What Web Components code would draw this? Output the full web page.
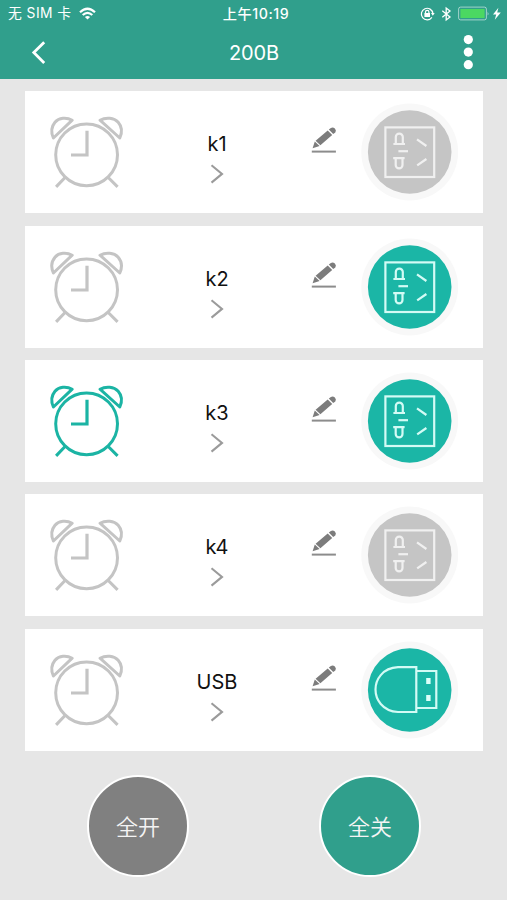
<!DOCTYPE html>
<html lang="zh-CN">
<head>
<meta charset="utf-8">
<meta name="viewport" content="width=device-width, initial-scale=1">
<title>200B</title>
<style>
  html, body {
    margin: 0;
    height: 100%;
    overflow: hidden;
    background: #e6e6e6;
    font-family: Inter, "Noto Sans CJK SC", sans-serif;
  }
</style>
</head>
<body>
<power-strip-page>
  <status-bar slot="header" carrier="无 SIM 卡" time="上午10:19"></status-bar>
  <nav-bar slot="header">200B</nav-bar>
  <outlet-card type="socket">k1</outlet-card>
  <outlet-card type="socket" on>k2</outlet-card>
  <outlet-card type="socket" on timer>k3</outlet-card>
  <outlet-card type="socket">k4</outlet-card>
  <outlet-card type="usb" on>USB</outlet-card>
  <round-button slot="footer">全开</round-button>
  <round-button slot="footer" primary>全关</round-button>
</power-strip-page>

<script>
class PowerStripPage extends HTMLElement {
    constructor() {
        super()
        this.attachShadow({ mode: 'open' })
    }

    connectedCallback() {
        this.shadowRoot.innerHTML = `
      <style>
        :host {
          display: flex;
          flex-direction: column;
          width: 507px;
          height: 900px;
        }
        header {
          height: 79px;
          background: #309f8c;
          color: #fff;
        }
        main {
          display: flex;
          flex-direction: column;
          gap: 12.33px;
          padding: 12.4px 24px 0 25px;
        }
        footer {
          display: grid;
          grid-template-columns: 232px 232px;
          justify-items: center;
          padding: 24.6px 0 0 22px;
        }
      </style>
      <header><slot name="header"></slot></header>
      <main><slot></slot></main>
      <footer><slot name="footer"></slot></footer>
    `
    }
}

class StatusBar extends HTMLElement {
    constructor() {
        super()
        this.attachShadow({ mode: 'open' })
    }

    connectedCallback() {
        this.shadowRoot.innerHTML = `
      <style>
        :host {
          display: grid;
          grid-template-columns: 1fr auto 1fr;
          align-items: center;
          height: 27px;
          padding: 0 5px 0 8px;
          font-size: 13.8px;
          line-height: 27px;
        }
        .left, .right {
          display: flex;
          align-items: center;
        }
        .left { gap: 7px; letter-spacing: 0.45px; }
        .right { justify-content: flex-end; }
        .time { font-size: 14.2px; font-weight: 500; letter-spacing: 0.6px; padding-left: 2px; }
        svg { display: block; }
      </style>
      <div class="left">
        <span>${this.getAttribute('carrier')}</span>
        <svg width="17" height="13" viewBox="0 0 17 13" fill="none" stroke="#fff" stroke-width="2.2">
          <path d="M1 5.2 Q8.5 -1.7 16 5.2"/>
          <path d="M3.7 8 Q8.5 3.6 13.3 8"/>
          <path d="M8.5 12.6 L5.9 10 Q8.5 7.9 11.1 10 Z" fill="#fff" stroke="none"/>
        </svg>
      </div>
      <span class="time">${this.getAttribute('time')}</span>
      <div class="right">
        <svg width="82" height="16" viewBox="0 0 82 16">
          <g fill="none" stroke="#fff" stroke-width="1.2">
            <path d="M11.9 11.4 A5.8 5.8 0 1 1 12.9 7.5"/>
            <path d="M5.5 7.3 V6 a1.7 1.7 0 0 1 3.4 0 V7.3"/>
          </g>
          <path d="M4.4 7 H10 V11 H4.4 Z M11 7 H14.7 L12.8 9.8 Z" fill="#fff"/>
          <path d="M22.3 4.8 L30 11 L26.2 14 V2 L30 5 L22.3 11.2" fill="none" stroke="#fff" stroke-width="1.3"/>
          <rect x="38.6" y="1.1" width="27.8" height="12.8" rx="2" fill="none" stroke="#fff" stroke-opacity=".55"/>
          <rect x="40.4" y="2.9" width="24.2" height="9.2" rx=".7" fill="#4bd862"/>
          <path d="M67.6 5.5 q1.7 2 0 4 Z" fill="#fff" fill-opacity=".6"/>
          <path d="M78.4 1.8 L73 8.6 H76.2 L74.8 13.8 L80.8 6.6 H77.2 Z" fill="#fff"/>
        </svg>
      </div>
    `
    }
}

class NavBar extends HTMLElement {
    constructor() {
        super()
        this.attachShadow({ mode: 'open' })
    }

    connectedCallback() {
        this.shadowRoot.innerHTML = `
      <style>
        :host {
          display: grid;
          grid-template-columns: 1fr auto 1fr;
          align-items: center;
          height: 51px;
          padding: 0 30px 0 31px;
          font-size: 20px;
          line-height: 49px;
        }
        svg { display: block; }
        .more { justify-self: end; }
        .title { letter-spacing: -0.15px; padding-top: 2px; }
      </style>
      <svg width="15" height="24" viewBox="0 0 15 24" fill="none" stroke="#fff" stroke-width="2.8">
        <path d="M13.2 1.2 L2.8 11.6 L13.2 22"/>
      </svg>
      <span class="title"><slot></slot></span>
      <svg class="more" width="18" height="36" viewBox="0 0 18 36" fill="#fff">
        <circle cx="9.3" cy="4.6" r="4.6"/>
        <circle cx="9.3" cy="17.1" r="4.6"/>
        <circle cx="9.3" cy="29.7" r="4.6"/>
      </svg>
    `
    }
}

class AlarmClock extends HTMLElement {
    constructor() {
        super()
        this.attachShadow({ mode: 'open' })
    }

    connectedCallback() {
        const color = this.hasAttribute('on') ? '#1bb4a4' : '#c4c4c4'
        this.shadowRoot.innerHTML = `
      <style>
        :host { display: block; }
        svg { display: block; }
      </style>
      <svg width="123" height="122" viewBox="0 0 123 122" fill="none"
           stroke="${color}" stroke-width="3" stroke-linejoin="round">
        <circle cx="61.6" cy="63.8" r="30.9"/>
        <path d="M62 39.8 V64 H46" stroke-width="3.2" stroke-linejoin="miter"/>
        <path d="M47.2 29.2 C41.5 25.9 33.8 26.6 30 31.2 C26.3 35.6 26 41.6 28.4 47 Z"/>
        <path d="M75 29.2 C81 25.9 89 26.6 93.2 31.2 C97 35.6 97.2 41.6 94.8 47 Z"/>
        <path d="M40.3 86.2 L31.1 95.9 M83 86.2 L92.6 95.9"/>
      </svg>
    `
    }
}

class OutletSwitch extends HTMLElement {
    constructor() {
        super()
        this.attachShadow({ mode: 'open' })
    }

    connectedCallback() {
        const on = this.hasAttribute('on')
        const icons = {
            socket: `
          <rect x="24.4" y="24.4" width="48.8" height="49.6"/>
          <path d="M32.4 41 H44 M34.8 41 V34.1 a3.5 3.5 0 0 1 7 0 V41"/>
          <path d="M37.4 48.2 H47"/>
          <path d="M32.2 55.2 H43.6 M34.7 55.2 V62 a3.4 3.4 0 0 0 6.8 0 V55.2"/>
          <path d="M56 36.3 L65.4 43 M56.2 62.4 L65.4 56"/>`,
            usb: `
          <path d="M55.3 26.2 H37 C21 27 14.5 39 14.5 48.5 C14.5 58 21 70.2 37 71 H55.3 Z"/>
          <path d="M55.3 30 H75.3 V67 H55.3"/>
          <path d="M65.2 37 h4.4 v6 h-4.4 Z M65.2 54 h4.4 v6 h-4.4 Z" fill="#ddfff9" stroke="none"/>`
        }
        this.shadowRoot.innerHTML = `
      <style>
        :host { display: block; }
        svg { display: block; }
      </style>
      <svg width="98" height="98" viewBox="0 0 98 98">
        <circle cx="48.7" cy="49" r="48.4" fill="#f8f8f8"/>
        <circle cx="48.7" cy="49" r="41.8" fill="${on ? '#1bb6a6' : '#c5c5c5'}"/>
        <g fill="none" stroke="${on ? '#d3fbf5' : '#f0f0f0'}" stroke-width="2.2">
          ${icons[this.getAttribute('type')]}
        </g>
      </svg>
    `
    }
}

class OutletCard extends HTMLElement {
    constructor() {
        super()
        this.attachShadow({ mode: 'open' })
    }

    connectedCallback() {
        const on = this.hasAttribute('on') ? 'on' : ''
        const timer = this.hasAttribute('timer') ? 'on' : ''
        this.shadowRoot.innerHTML = `
      <style>
        :host {
          display: grid;
          grid-template-columns: 123px 138px 75px 122px;
          height: 122px;
          background: #fff;
          color: #111;
        }
        .name {
          display: flex;
          flex-direction: column;
          align-items: center;
          padding-top: 39.8px;
          font-size: 20px;
          line-height: 27px;
        }
        .name svg { margin-top: 6px; }
        .edit { justify-self: center; padding-top: 35px; }
        outlet-switch { padding-top: 12px; }
        svg { display: block; }
      </style>
      <alarm-clock ${timer}></alarm-clock>
      <div class="name">
        <span><slot></slot></span>
        <svg width="14" height="20" viewBox="0 0 14 20" fill="none" stroke="#9b9b9b" stroke-width="2.1">
          <path d="M1.5 1.2 L12 9.9 L1.5 18.6"/>
        </svg>
      </div>
      <div class="edit">
        <svg width="26" height="27" viewBox="0 0 26 27">
          <path d="M1.6 22.3 L3.8 15.6 L8.6 20 Z M4.6 14.8 L16.7 4.4 L21.2 9 L9.4 19.2 Z" fill="#7c7c7c"/>
          <path d="M17.8 3.6 L19.9 1.9 Q21.9 .6 23.9 2.6 Q25.7 4.6 24.3 6.4 L22.2 8.1 Z" fill="#7c7c7c"/>
          <path d="M.8 25.6 H24.9" stroke="#8c8c8c" stroke-width="2"/>
        </svg>
      </div>
      <outlet-switch type="${this.getAttribute('type')}" ${on}></outlet-switch>
    `
    }
}

class RoundButton extends HTMLElement {
    constructor() {
        super()
        this.attachShadow({ mode: 'open' })
    }

    connectedCallback() {
        this.shadowRoot.innerHTML = `
      <style>
        :host {
          display: flex;
          align-items: center;
          justify-content: center;
          box-sizing: border-box;
          width: 102px;
          height: 102px;
          padding-bottom: 2px;
          border: 2.5px solid #fff;
          border-radius: 50%;
          background: #808080;
          color: #f4f4f4;
          font-size: 22px;
          font-weight: 350;
        }
        :host([primary]) {
          background: #309f8c;
        }
      </style>
      <slot></slot>
    `
    }
}

customElements.define('power-strip-page', PowerStripPage)
customElements.define('status-bar', StatusBar)
customElements.define('nav-bar', NavBar)
customElements.define('alarm-clock', AlarmClock)
customElements.define('outlet-switch', OutletSwitch)
customElements.define('outlet-card', OutletCard)
customElements.define('round-button', RoundButton)
</script>
</body>
</html>
